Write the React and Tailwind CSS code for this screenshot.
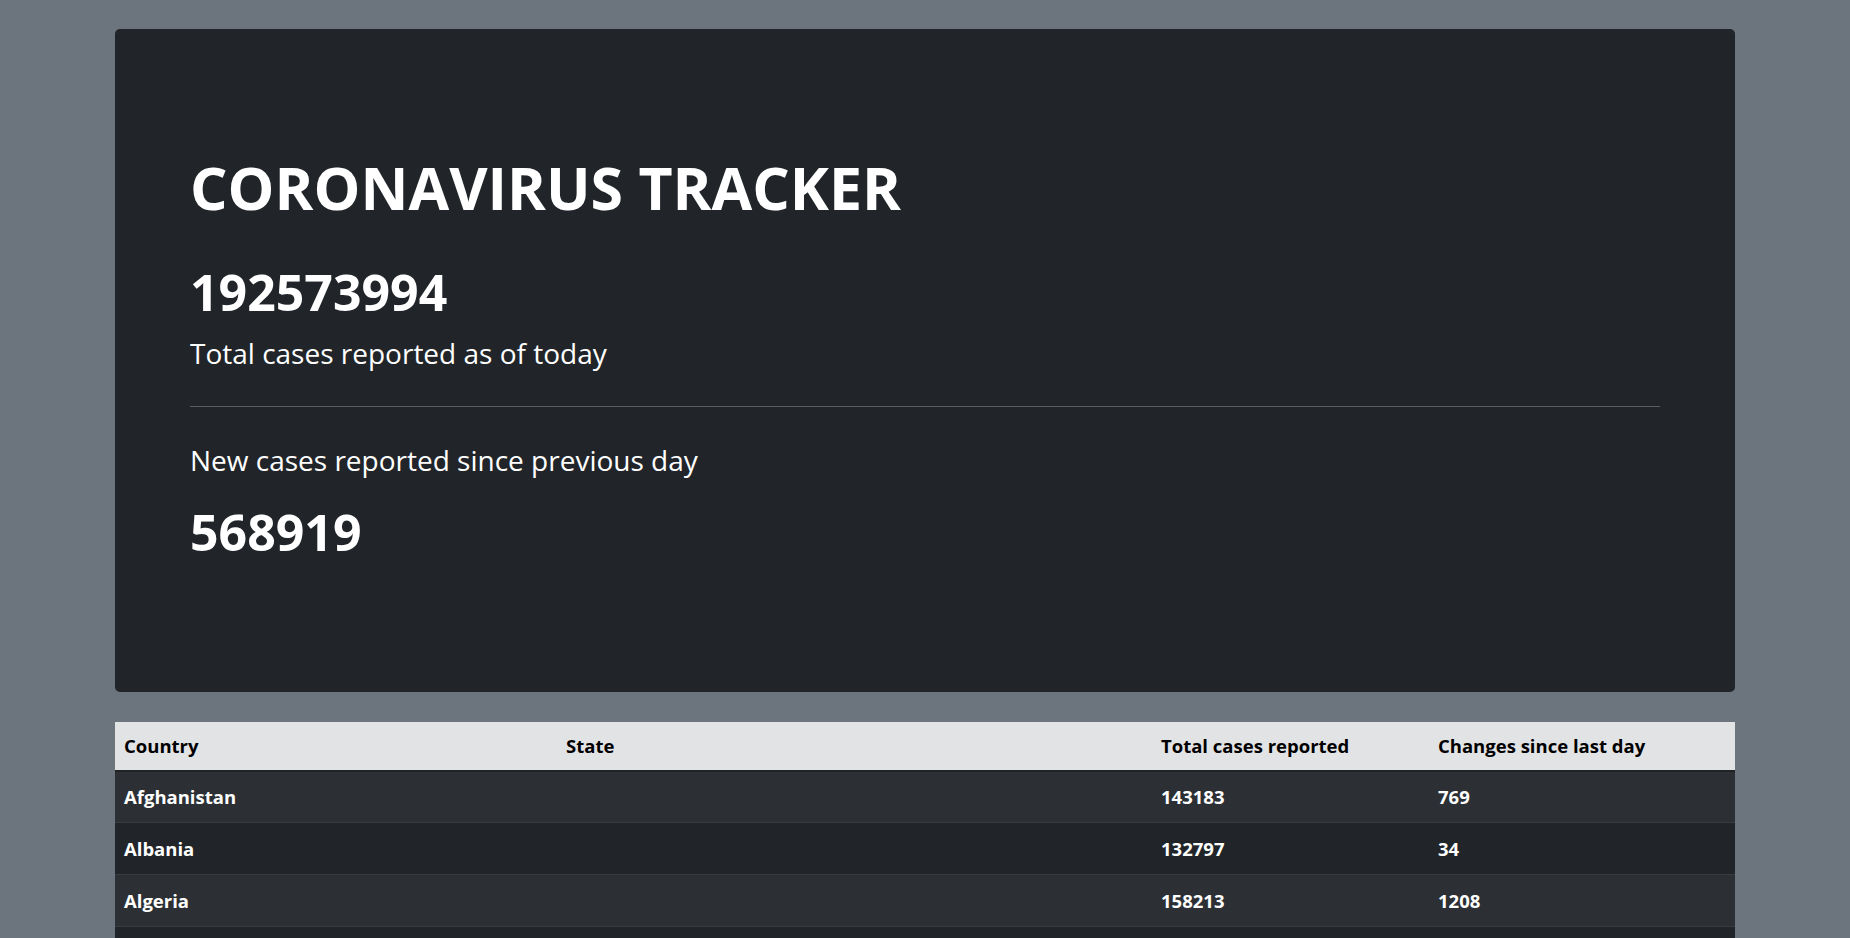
const rows = [
  { country: "Afghanistan", state: "", total: 143183, change: 769 },
  { country: "Albania", state: "", total: 132797, change: 34 },
  { country: "Algeria", state: "", total: 158213, change: 1208 },
  { country: "Andorra", state: "", total: 14380, change: 0 },
  { country: "Angola", state: "", total: 41227, change: 166 },
];

function App() {
  const font = { fontFamily: '"Open Sans", "Noto Sans", sans-serif' };

  return (
    <div className="min-h-screen bg-[#6c757d] pt-[29px] pb-10" style={font}>
      <div className="w-[1620px] mx-auto">
        <div className="bg-[#212529] rounded-[5px] text-white px-[75px] pt-[123px] pb-[130px]">
          <h1 className="text-[59px] font-bold leading-[1.2]">CORONAVIRUS TRACKER</h1>
          <h2 className="text-[50px] font-bold leading-[1.2] mt-[39px]">192573994</h2>
          <p className="text-[28px] leading-[1.5] mt-[10px]">Total cases reported as of today</p>
          <hr className="border-0 border-t border-[#5a5e63] mt-[32px]" />
          <p className="text-[28px] leading-[1.5] mt-[32px]">New cases reported since previous day</p>
          <h2 className="text-[50px] font-bold leading-[1.2] mt-[21px]">568919</h2>
        </div>

        <table className="w-full mt-[30px] text-[18.5px] font-bold border-collapse">
          <thead>
            <tr className="bg-[#e2e3e5] text-black border-b-2 border-[#1f2326]">
              <th className="w-[442px] h-[49px] px-[9px] text-left font-bold">Country</th>
              <th className="w-[595px] px-[9px] text-left font-bold">State</th>
              <th className="w-[277px] px-[9px] text-left font-bold">Total cases reported</th>
              <th className="px-[9px] text-left font-bold">Changes since last day</th>
            </tr>
          </thead>
          <tbody>
            {rows.map((r, i) => (
              <tr
                key={r.country}
                className={(i % 2 === 0 ? "bg-[#2c3034]" : "bg-[#212529]") + " text-white border-b border-[#373b3e]"}
              >
                <td className="h-[52px] px-[9px]">{r.country}</td>
                <td className="px-[9px]">{r.state}</td>
                <td className="px-[9px]">{r.total}</td>
                <td className="px-[9px]">{r.change}</td>
              </tr>
            ))}
          </tbody>
        </table>
      </div>
    </div>
  );
}

export default App;
